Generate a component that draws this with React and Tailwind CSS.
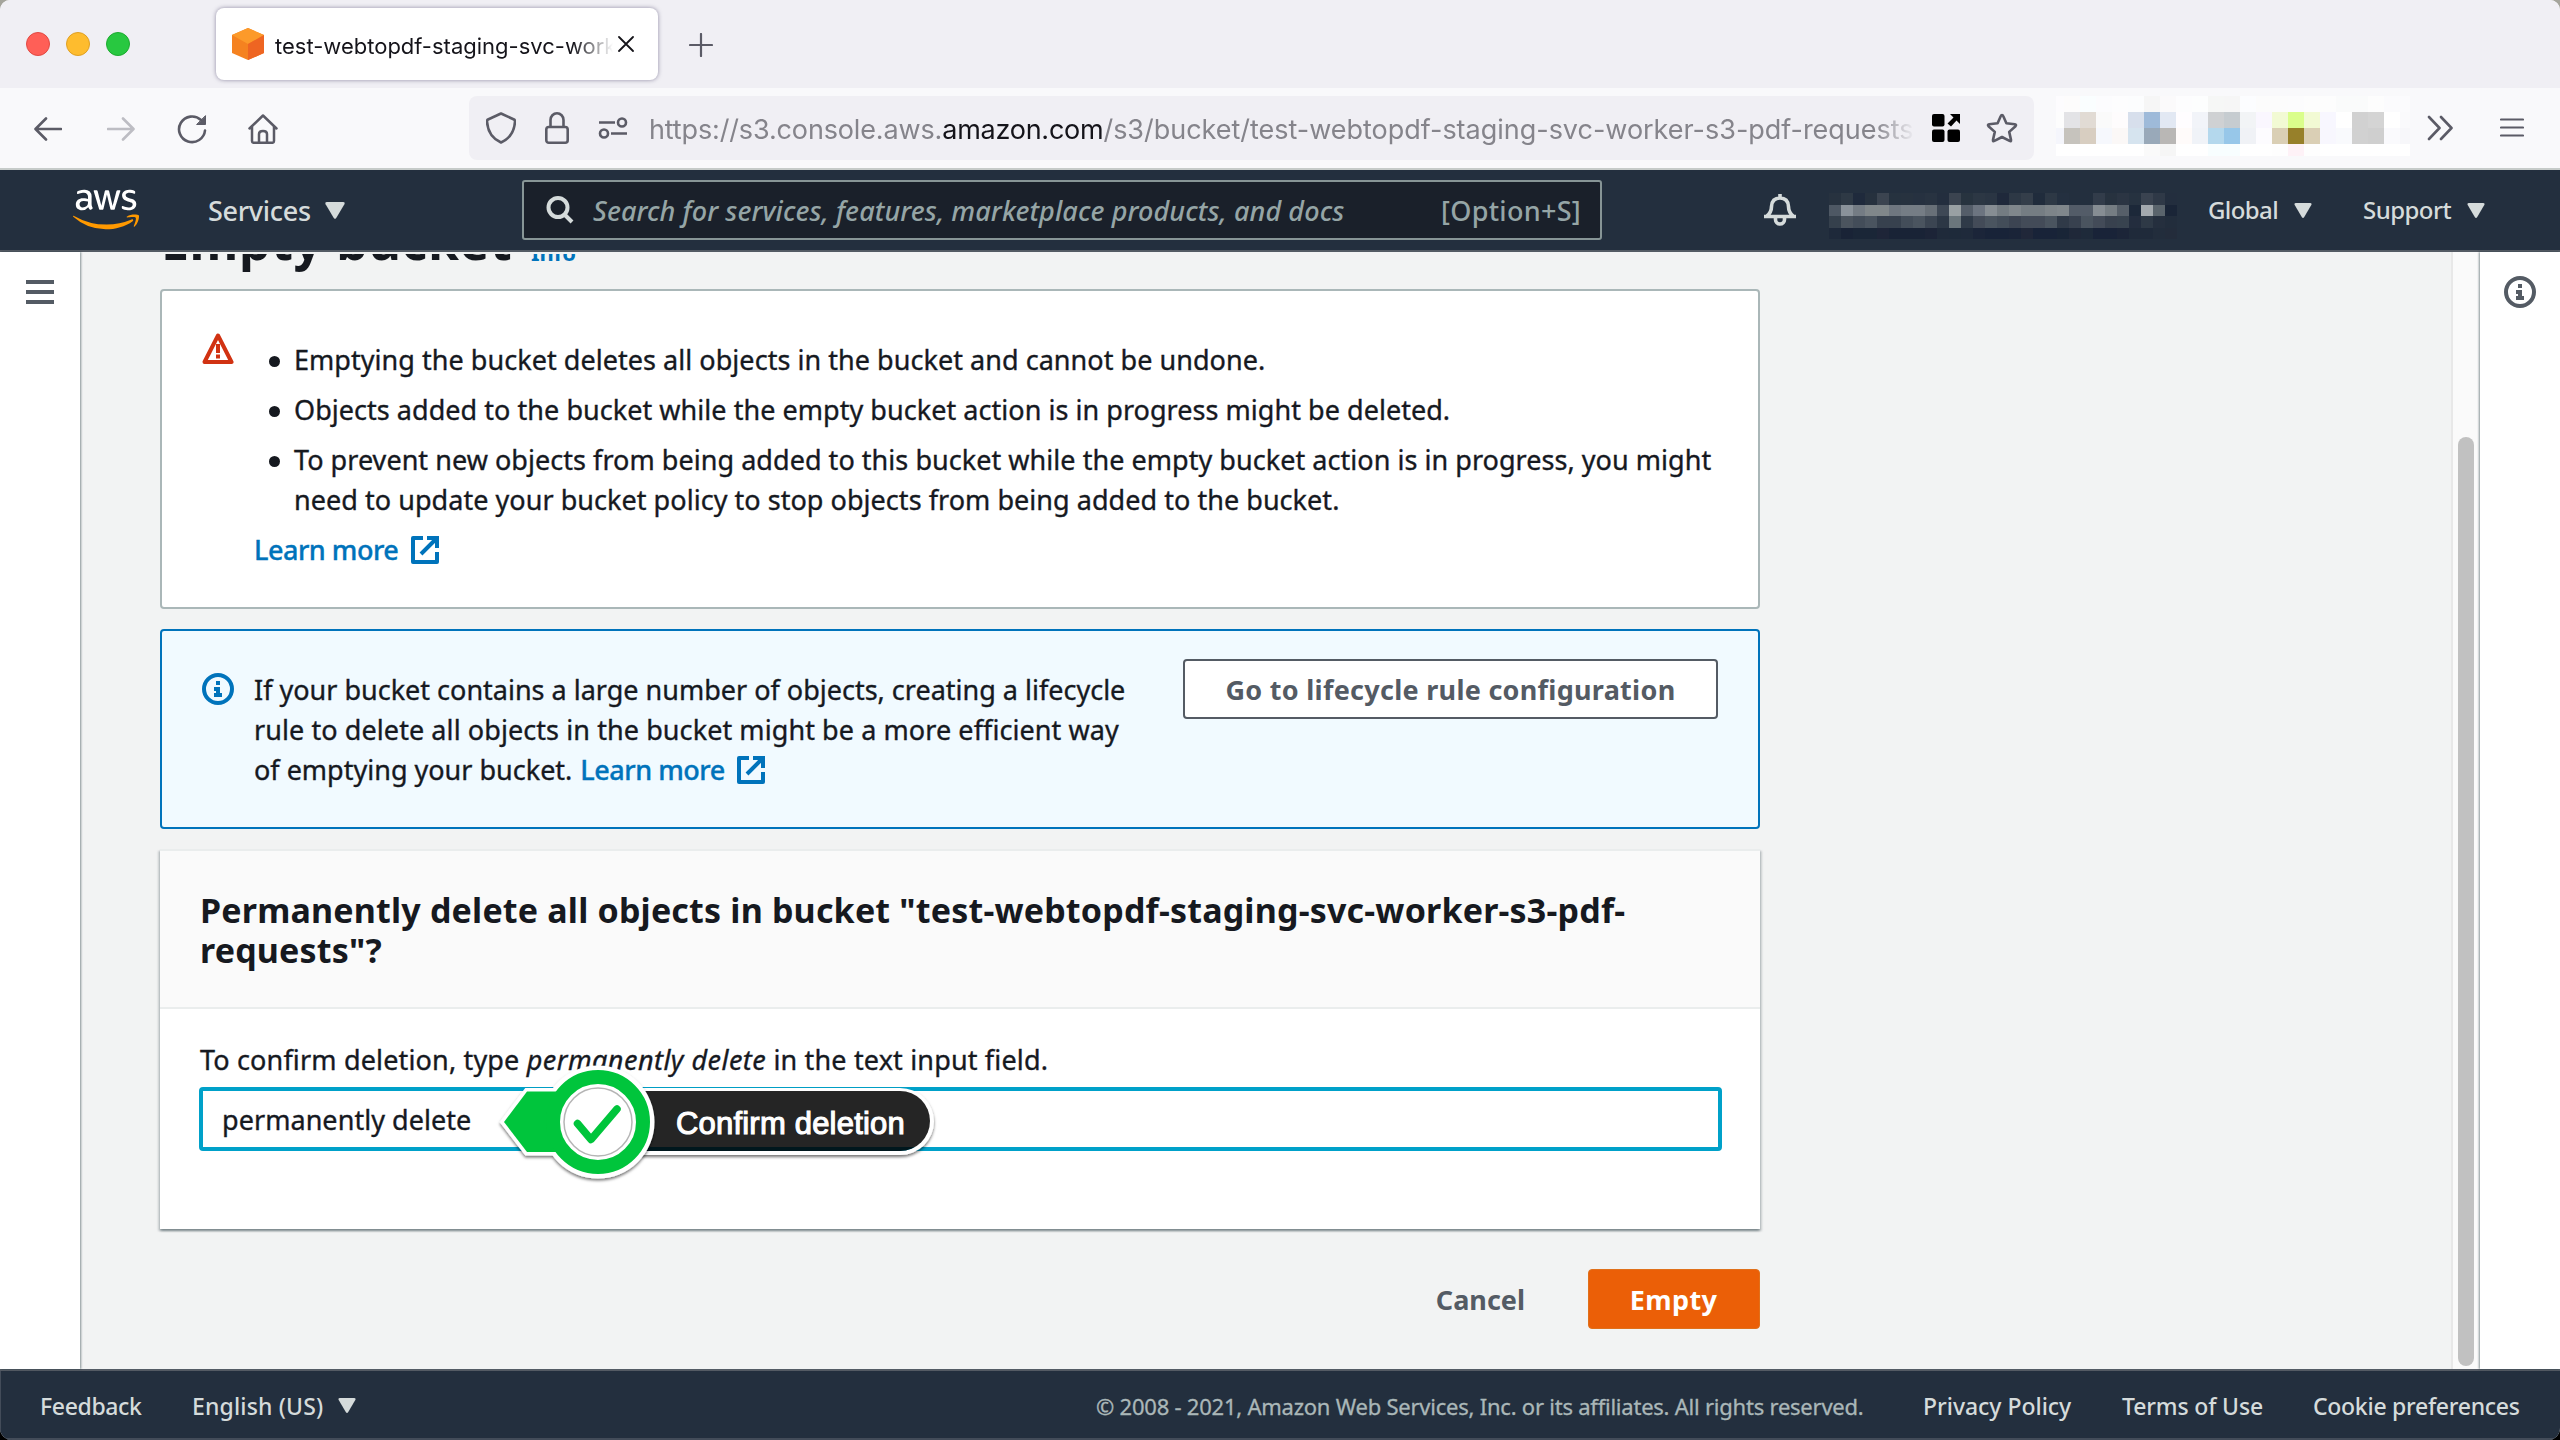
import React from "react";
import { FaAws } from "react-icons/fa";

const ACCOUNT_ROWS = [
  ["#27323f", "#2e3945", "#1f2a3c", "#26313e", "#3b4450", "#26323f", "#27323f", "#263140", "#283341", "#232e3e", "#3b4450", "#27333f", "#2c3744", "#2a3543", "#1f293b", "#2d3845", "#343e4a", "#202c3c", "#2d3845", "#243040", "#232f3e", "#232f3e", "#323c4a", "#27323f", "#2b3543", "#263240", "#3a4350", "#2f3947", "#232e3e"],
  ["#4e5864", "#8a929a", "#747c84", "#80878a", "#80878a", "#6f7780", "#757d85", "#757d85", "#687078", "#3e4855", "#99a0a3", "#545d69", "#6c7480", "#868d93", "#747c82", "#80878c", "#757d83", "#757d83", "#7d8489", "#80878c", "#535c68", "#535c68", "#868d93", "#757d83", "#565f69", "#1c2839", "#a3a9ae", "#5a646c", "#1a2537"],
  ["#35404c", "#4b545e", "#434d59", "#4a545f", "#37414e", "#37414e", "#434d59", "#4a545f", "#3b4552", "#2c3745", "#6b767c", "#2f3a48", "#434b58", "#4a545f", "#434d59", "#3c4452", "#434b58", "#434b58", "#4a545f", "#303a48", "#38414f", "#4a545f", "#434b58", "#38414e", "#38434f", "#232d3e", "#2e3946", "#252f3e", "#222d3c"],
  ["#1e293a", "#192336", "#1a2637", "#1a2637", "#1e2538", "#192336", "#192336", "#192336", "#1c2437", "#1f2a3a", "#1e2a3a", "#1f2a3b", "#1b2539", "#182338", "#182338", "#1a2438", "#202739", "#182338", "#182338", "#192537", "#1f2839", "#1e2a3a", "#192338", "#192338", "#1c2538", "#1f2a3a", "#1f2a3a", "#222d3c", "#232c3b"],
];

const EXT_ROWS = [
  ["#fdfcfe", "#fdfcfc", "#fafeff", "#fcfcfe", "#fdfdfe", "#fcfdfe", "#f6f6f6", "#fbfafb", "#fdfdfe", "#fdfefe", "#f6f7f6", "#f6f6f6", "#fcfdff", "#fcfcfc", "#fcfcfc", "#fcfcfd", "#fdfdfd", "#fdfdfd", "#fafbfb", "#fafbfb", "#fdfdfd", "#fbfbfd", "#fbfbfd"],
  ["#fdfdfd", "#e3e3e6", "#e1dbd4", "#fafafa", "#fefcfd", "#d7dfec", "#9ebad9", "#e2e8f3", "#fffdff", "#f2f4f9", "#cfd1d3", "#c6ccd0", "#f2f4f6", "#faf7ff", "#f2fad4", "#dafe8b", "#f2fad4", "#f8f7ff", "#ffffff", "#d1d1d1", "#d4d4d4", "#ffffff", "#fafafc"],
  ["#f5f6fc", "#c6c3bd", "#d8cec1", "#f6f8fd", "#fbf8f7", "#d6e4ef", "#99a9b9", "#b9b7b5", "#fffbfa", "#f0f3f8", "#b4d8ed", "#97c7e9", "#f0f2f6", "#fdfcff", "#dacfb5", "#97802a", "#dacfb5", "#f8f7fe", "#f9fafd", "#d1d1d1", "#cfcfcf", "#fafafd", "#f7f7fa"],
  ["#ffffff", "#ffffff", "#ffffff", "#ffffff", "#ffffff", "#ffffff", "#fafafa", "#f6f6f6", "#ffffff", "#ffffff", "#f8feff", "#f8feff", "#ffffff", "#ffffff", "#fefefe", "#fef2f7", "#fefefe", "#ffffff", "#ffffff", "#ffffff", "#ffffff", "#ffffff", "#ffffff"],
];

function Mosaic({ rows, cell, className }) {
  return (
    <div className={"grid shrink-0 overflow-hidden " + className}>
      {rows.map((row, i) => (
        <div key={i} className="flex">
          {row.map((c, j) => (
            <div key={j} className={"shrink-0 " + cell} style={{ backgroundColor: c }} />
          ))}
        </div>
      ))}
    </div>
  );
}

function Caret({ className = "" }) {
  return (
    <svg viewBox="0 0 20 17" className={"shrink-0 fill-[#d5dbdb] " + className}>
      <path d="M2 0h16q2.4 0 1.4 2.2L11.4 15.8q-1.4 2.2-2.8 0L.6 2.2Q-.4 0 2 0z" />
    </svg>
  );
}

function InfoIcon({ className }) {
  return (
    <svg viewBox="0 0 32 32" className={"size-8 shrink-0 " + className}>
      <circle cx="16" cy="16" r="14" fill="none" stroke="currentColor" strokeWidth="4" />
      <path d="M14 8h4v4h-4zM12 14h6v6h2v4h-8v-4h2v-2h-2z" fill="currentColor" />
    </svg>
  );
}

function ExternalIcon({ className = "" }) {
  return (
    <svg viewBox="0 0 28 28" className={"size-7 " + className} fill="none" stroke="currentColor" strokeWidth="4">
      <path d="M12 2H2v24h24V16" strokeLinejoin="round" />
      <path d="M16 2h10v10M25 3L10 18" />
    </svg>
  );
}

function TabBar() {
  return (
    <div className="flex h-[88px] items-start bg-[#f0eff4] pl-[26px]">
      <div className="mt-8 flex gap-4">
        <div className="size-6 rounded-full border border-[#e14942] bg-[#ff5f57]" />
        <div className="size-6 rounded-full border border-[#dfa023] bg-[#febc2e]" />
        <div className="size-6 rounded-full border border-[#1dab2f] bg-[#28c840]" />
      </div>
      <div className="mt-2 ml-[86px] flex h-[72px] w-[442px] items-center rounded-lg bg-white pl-4 shadow-[0_0_4px_rgba(90,85,120,0.65)]">
        <svg viewBox="0 0 32 32" className="size-8 shrink-0">
          <path d="M16 0L32 7v18L16 32 0 25V7z" fill="#f58220" />
          <path d="M16 0L32 7 16 16 0 7z" fill="#fc9a2a" />
          <path d="M32 7v18L16 32V16z" fill="#ee6522" />
        </svg>
        <div className="mt-1 ml-[11px] w-[340px] overflow-hidden font-[Inter,sans-serif] text-[22px] whitespace-nowrap text-[#15141a] mask-r-from-[298px] mask-r-to-[338px]">
          test-webtopdf-staging-svc-worker
        </div>
        <svg viewBox="0 0 16 16" className="ml-[3px] size-4 shrink-0" stroke="#15141a" strokeWidth="1.8" strokeLinecap="round">
          <path d="M1 1l14 14M15 1L1 15" />
        </svg>
      </div>
      <svg viewBox="0 0 24 24" className="mt-[33px] ml-[31px] size-6" stroke="#5b5b66" strokeWidth="2.2" strokeLinecap="round">
        <path d="M12 1v22M1 12h22" />
      </svg>
    </div>
  );
}

function Toolbar() {
  return (
    <div className="flex h-[82px] items-center border-b-2 border-[#c6cbc9] bg-[#f9f9fb] pl-[34px] text-[#5b5b66]">
      <svg viewBox="0 0 28 24" className="mt-0.5 h-6 w-7" fill="none" stroke="currentColor" strokeWidth="2.6" strokeLinecap="round" strokeLinejoin="round">
        <path d="M27 12H2M12 1.5L1.5 12 12 22.5" />
      </svg>
      <svg viewBox="0 0 28 24" className="mt-0.5 ml-[45px] h-6 w-7 text-[#bdbdc3]" fill="none" stroke="currentColor" strokeWidth="2.6" strokeLinecap="round" strokeLinejoin="round">
        <path d="M1 12h25M16 1.5L26.5 12 16 22.5" />
      </svg>
      <svg viewBox="0 0 30 30" className="mt-0.5 ml-[42px] size-[30px]" fill="none" stroke="currentColor" strokeWidth="2.6" strokeLinecap="round">
        <path d="M28 16.5A13 12.8 0 1 1 24 6" />
        <path d="M28.5 2v8.5H20z" fill="currentColor" strokeWidth="1" strokeLinejoin="round" />
      </svg>
      <svg viewBox="0 0 30 30" className="mt-0.5 ml-[41px] size-[30px]" fill="none" stroke="currentColor" strokeWidth="2.5" strokeLinejoin="round" strokeLinecap="round">
        <path d="M1.5 14.5L15 1.5l13.500 13M4 12.5V27q0 1.800 1.800 1.800h18.400q1.800 0 1.800-1.800V12.5" />
        <path d="M11 28.500V20q0-3 4-3t4 3v8.500" />
      </svg>
      <div className="ml-[191px] flex h-16 w-[1565px] shrink-0 items-center rounded-lg bg-[#f0eff4] pl-[17px]">
        <svg viewBox="0 0 30 32" className="h-8 w-[30px] shrink-0" fill="none" stroke="currentColor" strokeWidth="2.6" strokeLinejoin="round">
          <path d="M15 1.5L28 7.5q1 .5 1 2-1 15-14 21Q2 24.500 1 9.500q0-1.500 1-2z" />
        </svg>
        <svg viewBox="0 0 24 32" className="ml-[29px] h-8 w-6 shrink-0" fill="none" stroke="currentColor" strokeWidth="2.6">
          <rect x="1.3" y="15" width="21.4" height="15.7" rx="2.5" />
          <path d="M5.5 15V8a6.500 6.700 0 0 1 13 0v7" />
        </svg>
        <svg viewBox="0 0 30 22" className="ml-[29px] h-[22px] w-[30px] shrink-0" fill="none" stroke="currentColor" strokeWidth="2.6">
          <path d="M1 5.500h16M13 16.500h16" />
          <circle cx="24" cy="5.500" r="4" />
          <circle cx="6" cy="16.500" r="4" />
        </svg>
        <div className="mt-[3px] ml-[21px] w-[1266px] shrink-0 overflow-hidden font-[Inter,sans-serif] text-[27px] leading-10 tracking-[-0.02px] whitespace-nowrap text-[#85848b] mask-r-from-[1226px] mask-r-to-[1266px]">
          <span className="tracking-[-0.14px]">https://s3.console.aws.</span>
          <span className="tracking-[-0.25px] text-[#15141a]">amazon.com</span>
          <span>/s3/bucket/test-webtopdf-staging-svc-worker-s3-pdf-requests?</span>
        </div>
        <svg viewBox="0 0 28 28" className="ml-[17px] size-7 shrink-0" fill="#000">
          <rect width="12.5" height="12.5" rx="2" />
          <rect y="15.5" width="12.5" height="12.5" rx="2" />
          <rect x="15.5" y="15.5" width="12.5" height="12.5" rx="2" />
          <path d="M18 0h10v10l-3.500-3.500L19 12.500 15.500 9.500l6-6z" />
        </svg>
        <svg viewBox="0 0 32 30" className="ml-[26px] h-[30px] w-8 shrink-0" fill="none" stroke="currentColor" strokeWidth="2.6" strokeLinejoin="round">
          <path d="M16 2q.8 0 1.200 1l3.200 7.300 8.400 1q2 .4.700 1.900l-6.300 5.700 1.800 8q.3 1.900-1.400 1L16 24l-7.600 3.900q-1.700.9-1.400-1l1.800-8-6.300-5.700q-1.300-1.500.7-1.900l8.400-1L14.800 3q.4-1 1.200-1z" />
        </svg>
      </div>
      <Mosaic rows={EXT_ROWS} cell="w-4 first:w-2" className="-mt-1 ml-[22px] h-[60px] w-[354px] grid-rows-[16px_16px_16px_12px]" />
      <svg viewBox="0 0 26 26" className="ml-[17px] size-[26px] shrink-0" fill="none" stroke="currentColor" strokeWidth="2.6" strokeLinecap="round" strokeLinejoin="round">
        <path d="M2 2l10.500 11L2 24M14 2l10.500 11L14 24" />
      </svg>
      <svg viewBox="0 0 24 20" className="ml-[47px] h-5 w-6 shrink-0" stroke="currentColor" strokeWidth="2.2" strokeLinecap="round">
        <path d="M1 1.500h22M1 9.500h22M1 17.500h22" />
      </svg>
    </div>
  );
}

function AwsNav() {
  return (
    <div className="flex h-[82px] items-center border-b-2 border-[#545b64] bg-[#232f3e] pl-[73px] font-medium text-[#d5dbdb]">
      <svg width="0" height="0">
        <defs>
          <linearGradient id="awsFill" x1="0" y1="0" x2="0" y2="1">
            <stop offset="0.6" stopColor="#ffffff" />
            <stop offset="0.6" stopColor="#ff9900" />
          </linearGradient>
        </defs>
      </svg>
      <FaAws className="-mt-px h-[53px] w-[66px] shrink-0" fill="url(#awsFill)" />
      <div className="mt-px ml-[69px] w-[117px] text-[27px] tracking-[-0.3px]">Services</div>
      <Caret className="h-[17px] w-5" />
      <div className="ml-[177px] flex h-[60px] w-[1080px] shrink-0 items-center rounded-[3px] border-2 border-[#879596] bg-[#1a202a] pl-[22px] text-[#95a5a6]">
        <svg viewBox="0 0 28 28" className="size-7 shrink-0" fill="none" stroke="#d5dbdb" strokeWidth="4">
          <circle cx="12" cy="11.5" r="9.5" />
          <path d="M18.500 18.500L26 26" />
        </svg>
        <div className="mt-px ml-[19px] w-[848px] text-[27px] tracking-[0.09px] whitespace-nowrap italic">
          Search for services, features, marketplace products, and docs
        </div>
        <div className="mt-px text-[27px] tracking-[0.3px]">[Option+S]</div>
      </div>
      <svg viewBox="0 0 32 32" className="ml-[162px] size-8 shrink-0" fill="none" stroke="#d5dbdb" strokeWidth="3.6" strokeLinejoin="round">
        <path d="M16 0v4M2.500 22.500q5-4 5-10Q8 4 16 4t8.500 8.500q0 6 5 10zM0 22.500h32" />
        <path d="M11.500 23v2.500a4.500 4.500 0 0 0 9 0V23" />
      </svg>
      <Mosaic rows={ACCOUNT_ROWS} cell="w-3" className="mt-3 ml-[33px] h-[46px] w-[348px] grid-rows-[12px_11px_12px_11px]" />
      <div className="ml-[31px] w-[86px] text-2xl tracking-[-0.6px]">Global</div>
      <Caret className="h-[15px] w-[18px]" />
      <div className="ml-[51px] w-[104px] text-2xl tracking-[-0.55px]">Support</div>
      <Caret className="h-[15px] w-[18px]" />
    </div>
  );
}

function LearnMore() {
  return (
    <span className="inline-flex items-center font-medium text-[#0073bb]">
      <span className="w-[157px] tracking-[-0.48px]">Learn more</span>
      <ExternalIcon />
    </span>
  );
}

function Bullet({ children }) {
  return (
    <li className="flex">
      <span className="mt-4 mr-[14px] size-[11px] shrink-0 rounded-full bg-[#16191f]" />
      <span>{children}</span>
    </li>
  );
}

function Callout() {
  return (
    <div className="absolute -top-6 left-[292px] h-[120px] w-[450px] [-webkit-text-stroke:0px]">
      <svg viewBox="0 0 450 120" className="absolute inset-0 h-full w-full overflow-visible">
        <defs>
          <filter id="drop" x="-10%" y="-20%" width="120%" height="150%">
            <feDropShadow dx="0" dy="2" stdDeviation="1.6" floodColor="#000" floodOpacity="0.55" />
          </filter>
          <clipPath id="outside" clipPathUnits="userSpaceOnUse">
            <path clipRule="evenodd" d="M0 0H450V120H0zM103 24H405a30 30 0 0 1 0 60H103z" />
          </clipPath>
        </defs>
        <g clipPath="url(#outside)">
          <path d="M103 21H405a34 33.500 0 0 1 0 67H103z" fill="#fff" filter="url(#drop)" />
        </g>
        <path d="M103 24H405a30 30 0 0 1 0 60H103z" fill="#000" fillOpacity="0.855" />
        <g filter="url(#drop)">
          <path d="M9 55L32 24.500H70V85H32z" fill="#fff" stroke="#fff" strokeWidth="7" />
          <circle cx="103" cy="55" r="56.5" fill="#fff" />
        </g>
        <path d="M9 55L32 24.500H70V85H32z" fill="#00c53c" />
        <circle cx="103" cy="55" r="45" fill="#fff" stroke="#00c53c" strokeWidth="14" />
        <circle cx="103" cy="55" r="34" fill="#fff" stroke="#b5b5b5" strokeWidth="1.5" />
        <path d="M82.500 56.500L96 72.500L122 42" fill="none" stroke="#00c53c" strokeWidth="7.5" strokeLinecap="round" strokeLinejoin="round" />
      </svg>
      <div className="absolute top-[37px] left-[181px] font-['Liberation_Sans',sans-serif] text-[31px] leading-10 tracking-[0.2px] whitespace-nowrap text-white [-webkit-text-stroke:1.1px_white]">
        Confirm deletion
      </div>
    </div>
  );
}

function Content() {
  return (
    <main className="h-full w-[2371px] overflow-hidden border-t-2 border-[#f2f3f3] bg-[#f2f3f3] pl-20">
      <div className="-mt-[38px] flex h-[73px] w-[1600px] items-start font-bold">
        <h1 className="ml-px w-[370px] text-[50px] leading-[50px] tracking-[0.6px] whitespace-nowrap">Empty bucket</h1>
        <span className="mt-[11px] text-[22px] leading-[50px] text-[#0073bb]">Info</span>
      </div>

      <section className="flex h-[320px] w-[1600px] rounded-[4px] border-2 border-[#aab7b8] bg-white pt-[49px] pl-10">
        <svg viewBox="0 0 32 32" className="-mt-2 size-8 shrink-0">
          <path d="M16 3.500L29.500 30H2.500z" fill="none" stroke="#d13212" strokeWidth="4" strokeLinejoin="round" />
          <path d="M14 12h4v9h-4zM14 22.500h4v4h-4z" fill="#d13212" />
        </svg>
        <div className="ml-5 [-webkit-text-stroke:0.35px]">
          <ul className="ml-[15px] flex flex-col gap-2.5 tracking-[0.04px] whitespace-nowrap">
            <Bullet>Emptying the bucket deletes all objects in the bucket and cannot be undone.</Bullet>
            <Bullet>Objects added to the bucket while the empty bucket action is in progress might be deleted.</Bullet>
            <Bullet>
              To prevent new objects from being added to this bucket while the empty bucket action is in progress, you might
              <br />
              need to update your bucket policy to stop objects from being added to the bucket.
            </Bullet>
          </ul>
          <div className="mt-2.5">
            <LearnMore />
          </div>
        </div>
      </section>

      <section className="mt-5 flex h-[200px] w-[1600px] rounded-[4px] border-2 border-[#0073bb] bg-[#f1faff] pt-7 pl-10">
        <InfoIcon className="mt-[14px] text-[#0073bb]" />
        <div className="mt-[11px] ml-5 w-[929px] whitespace-nowrap [-webkit-text-stroke:0.35px]">
          If your bucket contains a large number of objects, creating a lifecycle
          <br />
          <span className="tracking-[0.08px]">rule to delete all objects in the bucket might be a more efficient way</span>
          <br />
          <span className="flex items-center gap-2">
            of emptying your bucket. <LearnMore />
          </span>
        </div>
        <button className="h-[60px] w-[535px] rounded-[4px] border-2 border-[#545b64] bg-white pt-px font-bold tracking-[0.28px] text-[#545b64]">
          Go to lifecycle rule configuration
        </button>
      </section>

      <section className="mt-5 h-[380px] w-[1600px] border-t-2 border-[#eaeded] bg-white shadow-[0_2px_2px_rgba(0,28,36,0.3),2px_2px_2px_rgba(0,28,36,0.15),-2px_2px_2px_rgba(0,28,36,0.15)]">
        <h2 className="h-[158px] border-b-2 border-[#eaeded] bg-[#fafafa] pt-[39px] pl-10 text-[34px] leading-10 font-bold tracking-[0.18px] whitespace-nowrap">
          Permanently delete all objects in bucket "test-webtopdf-staging-svc-worker-s3-pdf-
          <br />
          requests"?
        </h2>
        <div className="pt-[31px] pl-[39px] [-webkit-text-stroke:0.35px]">
          <p className="ml-px tracking-[0.16px] whitespace-nowrap">
            To confirm deletion, type <em className="tracking-[0.47px]">permanently delete</em> in the text input field.
          </p>
          <div className="relative mt-[7px] flex h-16 w-[1523px] items-center rounded-[4px] border-4 border-[#00a1c9] bg-white pt-px pl-[19px] tracking-[0.05px]">
            permanently delete
            <Callout />
          </div>
        </div>
      </section>

      <div className="mt-10 flex h-[60px] w-[1600px] items-center justify-end font-bold">
        <span className="mt-px mr-[63px] text-[#545b64]">Cancel</span>
        <button className="h-[60px] w-[172px] rounded-[4px] border border-[#e0701a] bg-[#eb5f07] pt-px pr-px tracking-[0.4px] text-white">Empty</button>
      </div>
    </main>
  );
}

function Footer() {
  return (
    <footer className="flex h-[71px] items-center border-t-2 border-[#545b64] bg-[#232f3e] pr-10 pl-10 text-[23px] font-medium text-[#d5dbdb] shadow-[inset_1px_-2px_0_#434c59]">
      <span className="w-[152px] tracking-[-0.35px]">Feedback</span>
      <span className="w-[146px] tracking-[0.15px]">English (US)</span>
      <Caret className="h-[15px] w-[18px]" />
      <span className="ml-auto w-[827px] text-[22px] font-normal tracking-[-0.23px] whitespace-nowrap text-[#aab7b8] [-webkit-text-stroke:0.3px]">
        © 2008 - 2021, Amazon Web Services, Inc. or its affiliates. All rights reserved.
      </span>
      <span className="w-[199px] tracking-[-0.03px] whitespace-nowrap">Privacy Policy</span>
      <span className="w-[191px] tracking-[-0.15px] whitespace-nowrap">Terms of Use</span>
      <span className="w-[207px] tracking-[-0.28px] whitespace-nowrap">Cookie preferences</span>
    </footer>
  );
}

export default function App() {
  return (
    <div className="h-[1440px] w-[2560px] bg-linear-to-b from-[#a5a59c] to-black">
      <div className="flex h-[1440px] w-[2560px] flex-col overflow-hidden rounded-t-[10px] rounded-b-[12px] bg-[#f2f3f3] font-['Noto_Sans',sans-serif] text-[27px] leading-10 text-[#16191f]">
        <TabBar />
        <Toolbar />
        <AwsNav />
        <div className="flex h-[1117px]">
          <aside className="z-10 h-full w-20 shrink-0 bg-white pt-7 pl-[26px] shadow-[1px_0_2px_rgba(0,28,36,0.45)]">
            <div className="flex w-7 flex-col gap-1.5">
              <div className="h-1 bg-[#545b64]" />
              <div className="h-1 bg-[#545b64]" />
              <div className="h-1 bg-[#545b64]" />
            </div>
          </aside>
          <Content />
          <div className="h-full w-[29px] shrink-0 border-l-2 border-[#e8e8e8] bg-[#fafafa] pt-[185px] pl-[5px]">
            <div className="h-[929px] w-4 rounded-full bg-[#c1c1c1]" />
          </div>
          <aside className="z-10 flex h-full w-20 shrink-0 justify-center bg-white pt-6 shadow-[-1px_0_2px_rgba(0,28,36,0.45)]">
            <InfoIcon className="text-[#545b64]" />
          </aside>
        </div>
        <Footer />
      </div>
    </div>
  );
}
